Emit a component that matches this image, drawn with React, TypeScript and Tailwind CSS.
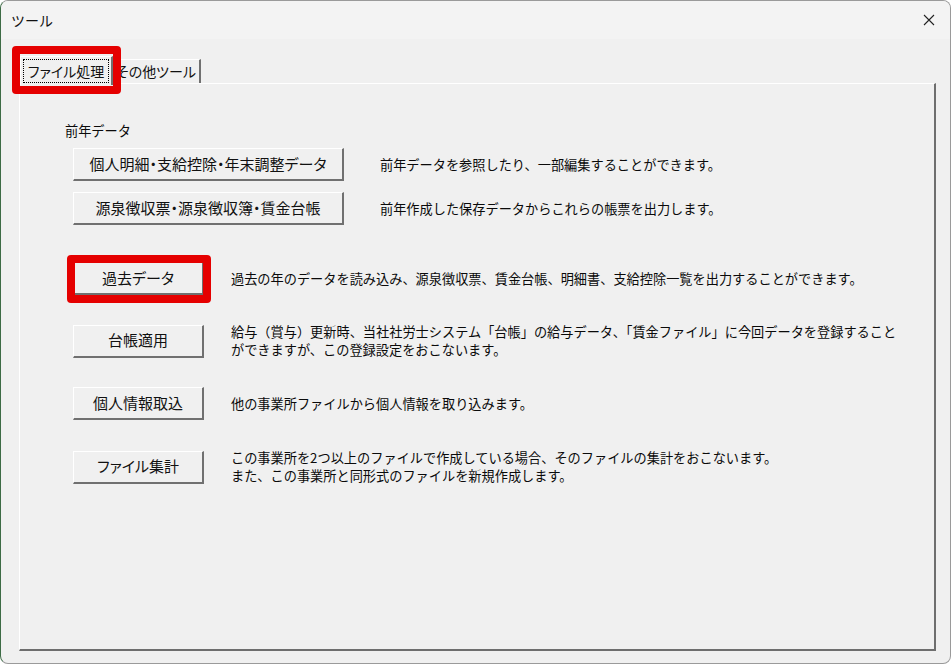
import React from 'react';

const font = { fontFamily: '"Noto Sans CJK JP", "Noto Sans", sans-serif' };

function Btn({ label, wide, mark }: { label: string; wide?: boolean; mark?: boolean }) {
  return (
    <div className="relative shrink-0">
      <div
        className={`${wide ? 'w-[271px]' : 'w-[131px]'} h-[33px] flex items-center justify-center bg-[#f0f0f0] border-t border-l border-white border-r-2 border-b-2 border-r-[#707070] border-b-[#707070] text-[15px] text-[#111] [font-feature-settings:'palt'] whitespace-nowrap`}
      >
        {label}
      </div>
      {mark && (
        <div className="absolute left-[-6px] top-[-7px] w-[144px] h-[48px] border-[8px] border-[#e50000] rounded-[4px]" />
      )}
    </div>
  );
}

function Row({ label, wide, mark, lines, className }: { label: string; wide?: boolean; mark?: boolean; lines: string[]; className: string }) {
  return (
    <div className={`flex items-center ${className}`}>
      <Btn label={label} wide={wide} mark={mark} />
      <div className={`${wide ? 'ml-[36px]' : 'ml-[27px]'} text-[13.2px] leading-[18px] text-[#0a0a0a] whitespace-nowrap`}>
        {lines.map((l) => (
          <div key={l}>{l}</div>
        ))}
      </div>
    </div>
  );
}

export default function App() {
  return (
    <div style={font} className="w-[951px] h-[664px] bg-[#f0f0f0] border border-[#9a9a9a] border-l-[#3d6b45] rounded-lg flex flex-col overflow-hidden">
      {/* title bar */}
      <div className="h-[38px] shrink-0 flex items-center justify-between pl-[10px] pr-[15px] bg-[#f3f3f3]">
        <span className="text-[14px] text-[#111]">ツール</span>
        <svg width="12" height="12" viewBox="0 0 12 12" className="text-[#222]">
          <path d="M1 1 L11 11 M11 1 L1 11" stroke="currentColor" strokeWidth="1.1" />
        </svg>
      </div>

      {/* tabs */}
      <div className="flex items-end pl-[19px] pt-[17px] relative z-10">
        <div className="relative h-[29px] w-[93px] -mb-[2px] flex bg-[#f0f0f0] border-t border-l border-white border-r-2 border-r-[#707070]">
          <div className="m-[2px] flex-1 border border-dotted border-black flex items-center justify-center text-[14px] text-[#111] [font-feature-settings:'palt']">
            ファイル処理
          </div>
          <div className="absolute left-[-9px] top-[-11px] w-[109px] h-[48px] border-[8px] border-[#e50000] rounded-[4px]" />
        </div>
        <div className="h-[24px] w-[88px] flex items-center justify-center bg-[#f0f0f0] border-t border-white border-r-2 border-r-[#707070] text-[14px] text-[#111] [font-feature-settings:'palt']">
          その他ツール
        </div>
      </div>

      {/* panel */}
      <div className="flex-1 ml-[18px] mr-[14px] mb-[12px] border-t border-l border-white border-r-2 border-b-2 border-r-[#6e6e6e] border-b-[#6e6e6e] pl-[53px] pt-[38px]">
        <div className="-ml-[8px] text-[13.2px] leading-[18px] text-[#0a0a0a]">前年データ</div>
        <Row
          className="mt-[8px]"
          label="個人明細・支給控除・年末調整データ"
          wide
          lines={['前年データを参照したり、一部編集することができます。']}
        />
        <Row
          className="mt-[11px]"
          label="源泉徴収票・源泉徴収簿・賃金台帳"
          wide
          lines={['前年作成した保存データからこれらの帳票を出力します。']}
        />
        <Row
          className="mt-[37px]"
          label="過去データ"
          mark
          lines={['過去の年のデータを読み込み、源泉徴収票、賃金台帳、明細書、支給控除一覧を出力することができます。']}
        />
        <Row
          className="mt-[28px]"
          label="台帳適用"
          lines={[
            '給与（賞与）更新時、当社社労士システム「台帳」の給与データ、「賃金ファイル」に今回データを登録すること',
            'ができますが、この登録設定をおこないます。',
          ]}
        />
        <Row
          className="mt-[28px]"
          label="個人情報取込"
          lines={['他の事業所ファイルから個人情報を取り込みます。']}
        />
        <Row
          className="mt-[29px]"
          label="ファイル集計"
          lines={[
            'この事業所を2つ以上のファイルで作成している場合、そのファイルの集計をおこないます。',
            'また、この事業所と同形式のファイルを新規作成します。',
          ]}
        />
      </div>
    </div>
  );
}
